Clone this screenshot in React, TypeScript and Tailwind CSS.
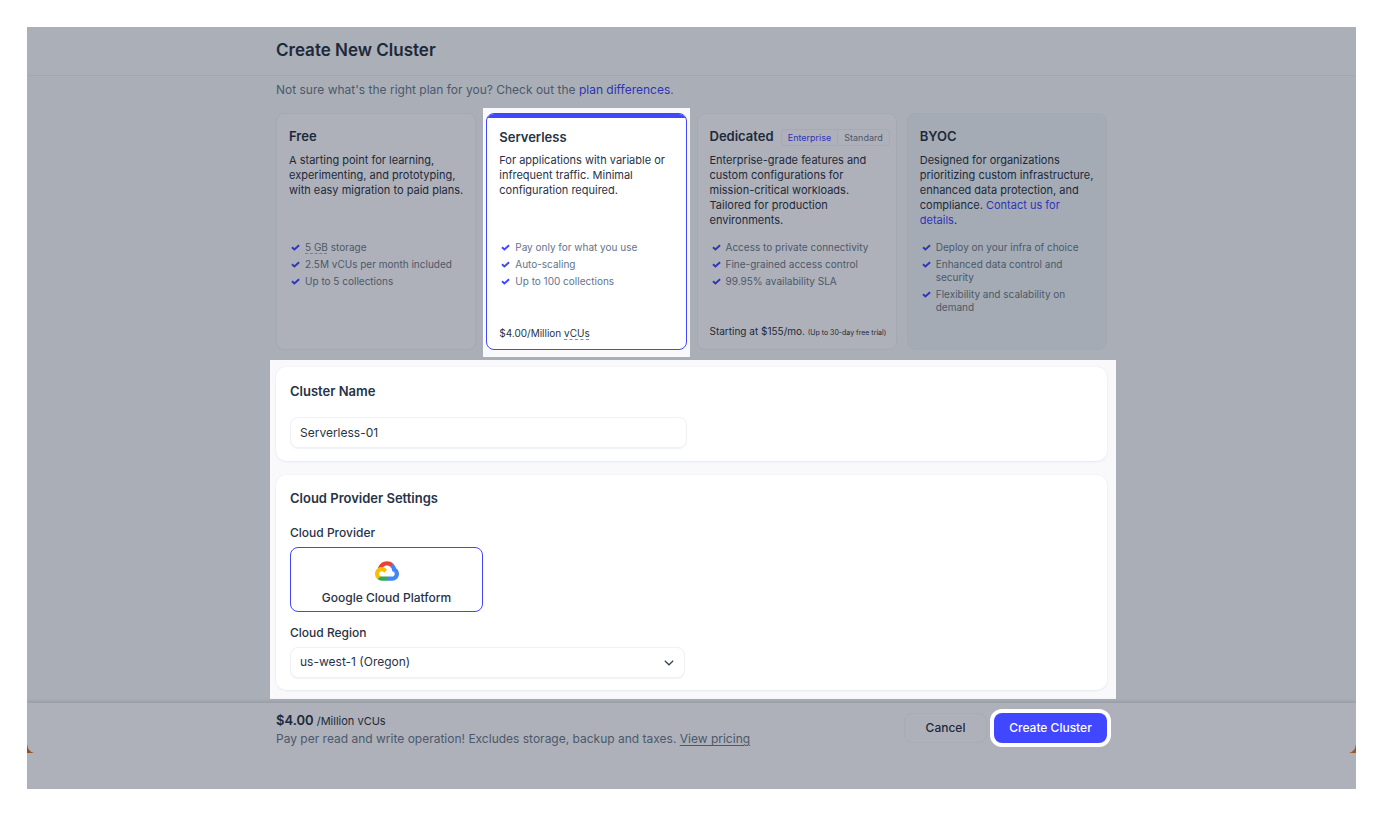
import { useState } from 'react'
import type { ReactNode } from 'react'

type Feature = { label: string; term?: string }

const FREE: Feature[] = [
  { term: '5 GB', label: ' storage' },
  { label: '2.5M vCUs per month included' },
  { label: 'Up to 5 collections' },
]
const SERVERLESS: Feature[] = [
  { label: 'Pay only for what you use' },
  { label: 'Auto-scaling' },
  { label: 'Up to 100 collections' },
]
const DEDICATED: Feature[] = [
  { label: 'Access to private connectivity' },
  { label: 'Fine-grained access control' },
  { label: '99.95% availability SLA' },
]
const BYOC: Feature[] = [
  { label: 'Deploy on your infra of choice' },
  { label: 'Enhanced data control and security' },
  { label: 'Flexibility and scalability on demand' },
]

function Check({ className }: { className: string }) {
  return (
    <svg viewBox="0 0 9 7" className={`mt-[3px] h-[7px] w-[9px] shrink-0 ${className}`} fill="none" stroke="currentColor" strokeWidth="1.9">
      <path d="M1 3.3 3.4 5.5 8.1 1.2" />
    </svg>
  )
}

function GoogleCloudLogo() {
  return (
    <svg viewBox="0 0 256 206" className="h-5 w-6" aria-hidden="true">
      <path fill="#EA4335" d="M170.25 56.82l22.25-22.25 1.48-9.37C153.44-11.68 88.98-7.5 52.42 33.92 42.27 45.42 34.73 59.77 30.72 74.57l7.97-1.12 44.5-7.34 3.44-3.52c19.8-21.74 53.27-24.66 76.13-6.17l7.49.4z" />
      <path fill="#4285F4" d="M224.2 73.92a100.25 100.25 0 0 0-30.22-48.72l-31.23 31.23a55.52 55.52 0 0 1 20.38 44.04v5.54c15.35 0 27.8 12.45 27.8 27.8 0 15.35-12.45 27.5-27.8 27.5h-55.67l-5.47 5.93v33.34l5.47 5.24h55.67c39.93.31 72.55-31.49 72.86-71.42a72.3 72.3 0 0 0-31.8-60.49z" />
      <path fill="#34A853" d="M71.87 205.8h55.59v-44.5H71.87c-3.96 0-7.88-.85-11.48-2.5l-7.89 2.42-22.4 22.25-1.96 7.58a71.9 71.9 0 0 0 43.73 14.75z" />
      <path fill="#FBBC05" d="M71.87 61.43C31.94 61.67-.24 94.23 0 134.16a72.3 72.3 0 0 0 28.14 56.89l32.25-32.25c-13.99-6.32-20.21-22.79-13.89-36.78 6.32-13.99 22.79-20.2 36.78-13.88a27.8 27.8 0 0 1 13.89 13.88l32.25-32.25a72.23 72.23 0 0 0-57.55-28.34z" />
    </svg>
  )
}

function FeatureList({ items, className, check }: { items: Feature[]; className: string; check: string }) {
  return (
    <ul className={`mt-3 flex flex-col gap-1 pl-[2px] text-[10px] leading-[13px] ${className}`}>
      {items.map(item => (
        <li key={item.label} className="flex gap-[5px]">
          <Check className={check} />
          <span>
            {item.term && <span className="underline decoration-[#3f92b8] decoration-dashed underline-offset-2">{item.term}</span>}
            {item.label}
          </span>
        </li>
      ))}
    </ul>
  )
}

type PlanProps = {
  title: string
  aside?: ReactNode
  description: ReactNode
  features: Feature[]
  price?: ReactNode
  className?: string
}

function Plan({ title, aside, description, features, price, className = 'bg-[#aeb1b9]' }: PlanProps) {
  return (
    <section className={`flex min-h-[237px] flex-col rounded-lg border border-[#a3aab2] px-3 pb-[9px] text-[#1d293b] ${className}`}>
      <div className="mt-[13px] flex h-5 items-center justify-between">
        <h2 className="text-[13px] font-semibold">{title}</h2>
        {aside}
      </div>
      <p className="mt-[6px] min-h-[76px] text-[11px] leading-[15px]">{description}</p>
      <FeatureList items={features} className="text-[#4c586b]" check="text-[#2f35b8]" />
      {price && <p className="mt-auto text-[10px] leading-[14px]">{price}</p>}
    </section>
  )
}

export default function App() {
  const [name, setName] = useState('Serverless-01')
  const [edition, setEdition] = useState('Enterprise')

  return (
    <div className="bg-white p-[27px] font-['Inter',sans-serif] text-[#1d293b] antialiased">
      <div className="overflow-hidden bg-[#aaafb7]">
        <header className="border-b border-[#a3a9b1] bg-[#abafb7]">
          <div className="mx-auto flex h-12 max-w-[831px] items-center">
            <h1 className="text-[17px] font-semibold">Create New Cluster</h1>
          </div>
        </header>

        <main className="mx-auto max-w-[831px] pt-[5px]">
          <p className="text-xs leading-[18px] text-[#4c586b]">
            Not sure what's the right plan for you? Check out the <a href="#plans" className="text-[#2f33b8]">plan differences</a>.
          </p>

          <div className="mt-[14px] grid grid-cols-4 gap-[10px]">
            <Plan
              title="Free"
              description="A starting point for learning, experimenting, and prototyping, with easy migration to paid plans."
              features={FREE}
            />
            <div className="-mx-[3px] -mt-[5px] -mb-[7px] bg-[#f9f9fc] px-[3px] pt-[5px] pb-[7px]">
              <section className="flex h-full flex-col overflow-hidden rounded-lg border border-[#4147fb] bg-white pb-[9px]">
                <div className="h-1 shrink-0 bg-[#4147fb]" />
                <div className="flex grow flex-col px-3 text-[#273347]">
                  <h2 className="mt-[9px] text-[13px] leading-5 font-semibold">Serverless</h2>
                  <p className="mt-[6px] min-h-[76px] text-[11px] leading-[15px]">For applications with variable or infrequent traffic. Minimal configuration required.</p>
                  <FeatureList items={SERVERLESS} className="text-[#64748b]" check="text-[#4147fb]" />
                  <p className="mt-auto text-[10px] leading-[14px]">
                    $4.00/Million <span className="underline decoration-[#38a8dc] decoration-dashed underline-offset-2">vCUs</span>
                  </p>
                </div>
              </section>
            </div>
            <Plan
              title="Dedicated"
              aside={
                <div className="-mr-[6px] flex h-[17px] divide-x divide-[#a5a9b2] rounded-[4px] border border-[#a5a9b2] text-[9px] leading-[15px]">
                  {['Enterprise', 'Standard'].map(option => (
                    <button key={option} onClick={() => setEdition(option)} className={`px-[6px] ${edition === option ? 'text-[#2f33b8]' : 'text-[#4c586b]'}`}>
                      {option}
                    </button>
                  ))}
                </div>
              }
              description="Enterprise-grade features and custom configurations for mission-critical workloads. Tailored for production environments."
              features={DEDICATED}
              price={<span className="whitespace-nowrap">Starting at $155/mo. <small className="text-[7px]">(Up to 30-day free trial)</small></span>}
            />
            <Plan
              title="BYOC"
              className="bg-[#a4abb4]"
              description={<>Designed for organizations prioritizing custom infrastructure, enhanced data protection, and compliance. <a href="#contact" className="text-[#2f33b8]">Contact us for details</a>.</>}
              features={BYOC}
            />
          </div>

          <div className="-mr-[9px] -ml-[6px] mt-[10px] flex flex-col gap-[14px] bg-[#f9f9fc] pt-[7px] pr-[9px] pb-[9px] pl-[6px] text-[#273347]">
            <section className="rounded-[10px] bg-white px-[14px] pt-[14px] pb-[13px] shadow-[0_0_2px_#e6ebf0,0_1px_2px_#e6ebf0]">
              <label htmlFor="cluster-name" className="block text-[13px] leading-5 font-semibold">Cluster Name</label>
              <input
                id="cluster-name"
                value={name}
                onChange={e => setName(e.target.value)}
                className="mt-4 block h-[31px] w-[397px] max-w-full rounded-lg border border-[#eff1f5] px-[9px] text-xs shadow-[0_1px_1px_#f1f3f6] outline-none"
              />
            </section>

            <section className="rounded-[10px] bg-white px-[14px] pt-[13px] pb-3 shadow-[0_0_2px_#e6ebf0,0_1px_2px_#e6ebf0]">
              <h2 className="text-[13px] leading-5 font-semibold">Cloud Provider Settings</h2>
              <h3 className="mt-4 text-xs leading-[18px] font-medium">Cloud Provider</h3>
              <button className="mt-[5px] flex h-[65px] w-[193px] flex-col items-center rounded-lg border border-[#4147fb] pt-[13px] text-xs font-medium">
                <GoogleCloudLogo />
                <span className="mt-2 leading-[18px]">Google Cloud Platform</span>
              </button>
              <label htmlFor="region" className="mt-3 block text-xs leading-[18px] font-medium">Cloud Region</label>
              <div className="mt-[5px] grid w-[395px] max-w-full items-center">
                <select id="region" className="col-start-1 row-start-1 h-[31px] appearance-none rounded-lg border border-[#eff1f5] bg-white px-[9px] pb-px text-xs shadow-[0_1px_1px_#f1f3f6] outline-none">
                  <option>us-west-1 (Oregon)</option>
                </select>
                <svg viewBox="0 0 10 6" className="pointer-events-none col-start-1 row-start-1 mr-[11px] h-[6px] w-[10px] justify-self-end" fill="none" stroke="#334155" strokeWidth="1.2">
                  <path d="M.8.8 5 4.8 9.2.8" />
                </svg>
              </div>
            </section>
          </div>
        </main>

        <footer className="relative mt-1 h-[86px] bg-[#aeb1b9] shadow-[0_-1px_4px_#90959d]">
          <div className="mx-auto flex max-w-[831px] items-start justify-between pt-[8px]">
            <div>
              <p className="text-[11px] leading-[18px]"><strong className="text-[13px] leading-[18px] font-semibold">$4.00</strong> /Million vCUs</p>
              <p className="text-xs leading-[18px] text-[#4c586b]">
                Pay per read and write operation! Excludes storage, backup and taxes. <a href="#pricing" className="underline underline-offset-2">View pricing</a>
              </p>
            </div>
            <div className="flex gap-[7px] pt-[2px] text-xs font-medium">
              <button className="h-[30px] w-[83px] rounded-lg border border-[#a8acb4]">Cancel</button>
              <button className="h-[30px] w-[113px] rounded-lg bg-[#4147ff] text-white ring-4 ring-white">Create Cluster</button>
            </div>
          </div>
          <svg viewBox="0 0 10 10" className="absolute top-10 left-0 size-[10px]" fill="#8f5220">
            <path d="M0 1Q1 9 7 10H0Z" />
          </svg>
          <svg viewBox="0 0 10 10" className="absolute top-10 right-0 size-[10px]" fill="#a0561c">
            <path d="M10 1Q9 9 3 10H10Z" />
          </svg>
        </footer>
      </div>
    </div>
  )
}
